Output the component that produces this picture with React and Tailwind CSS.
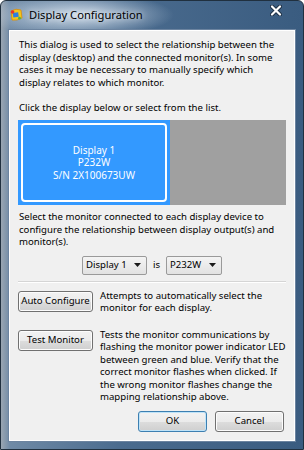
import React from 'react';

// Windows 7 style "Display Configuration" dialog

const AppIcon = () => (
  <svg width="14" height="14" viewBox="0 0 14 14">
    <path d="M2 3 Q7 0 12 2 L13 10 Q8 13 3 12 Z" fill="#f5c61b" stroke="#d58a10" strokeWidth="0.8" />
    <rect x="4" y="4.5" width="5.5" height="4.5" fill="#2f7de1" transform="rotate(-8 7 7)" />
    <circle cx="3.6" cy="4" r="1.8" fill="#e8352b" />
    <circle cx="10.5" cy="10.2" r="1.4" fill="#4cb648" />
  </svg>
);

const CloseX = () => (
  <svg width="12" height="11" viewBox="0 0 12 11">
    <path d="M2 1.5 L10 9.5 M10 1.5 L2 9.5" stroke="#1d2f44" strokeWidth="4" strokeLinecap="round" />
    <path d="M2 1.5 L10 9.5 M10 1.5 L2 9.5" stroke="#ffffff" strokeWidth="2.2" strokeLinecap="round" />
  </svg>
);

function WinButton({ children, className = '', isDefault = false }) {
  return (
    <button
      className={`h-[21px] rounded-[3px] border text-[9.6px] text-black leading-none bg-[linear-gradient(#f2f2f2_0%,#ebebeb_50%,#dddddd_51%,#cfcfcf_100%)] ${
        isDefault
          ? 'border-[#3c7fb1] shadow-[inset_0_0_0_1px_#bfe3f8]'
          : 'border-[#707070] shadow-[inset_0_0_0_1px_#fcfcfc]'
      } ${className}`}
    >
      {children}
    </button>
  );
}

function Combo({ value, className = '' }) {
  return (
    <div
      className={`h-[19px] flex items-center justify-between pl-[3px] pr-[5px] border border-[#9a9a9a] rounded-[2px] bg-[linear-gradient(#f4f4f4,#e2e2e2)] ${className}`}
    >
      <span>{value}</span>
      <svg width="7" height="4" viewBox="0 0 7 4">
        <path d="M0 0h7L3.5 4z" fill="#1a1a1a" />
      </svg>
    </div>
  );
}

export default function App() {
  return (
    <div className="w-[304px] h-[450px] flex flex-col border border-[#20303f] rounded-t-[6px] overflow-hidden bg-[radial-gradient(ellipse_95px_22px_at_78px_14px,rgba(214,226,238,0.95),rgba(214,226,238,0)_100%),linear-gradient(90deg,#9aa6b2_0%,#6f8aa6_3%,#4a6b8e_40%,#3a5c80_100%)] font-['Noto_Sans',sans-serif] text-[9.6px] leading-[12.5px] text-black">
      {/* title bar */}
      <div className="h-[28px] flex items-center pl-[8px] pr-[21px]">
        <AppIcon />
        <span className="ml-[6px] text-[11.2px] text-black [text-shadow:0_0_6px_rgba(255,255,255,0.9)]">
          Display Configuration
        </span>
        <div className="ml-auto -mt-[9px]">
          <CloseX />
        </div>
      </div>

      {/* client area */}
      <div className="flex-1 mx-[7px] mb-[7px] border border-[#6c84a0] bg-[#f0f0f0] shadow-[inset_0_0_0_1px_#ffffff] px-[9px] pt-[9px] flex flex-col">
        <div className="pl-[1px] whitespace-nowrap">
          <div>This dialog is used to select the relationship between the</div>
          <div>display (desktop) and the connected monitor(s). In some</div>
          <div>cases it may be necessary to manually specify which</div>
          <div>display relates to which monitor.</div>
          <div className="mt-[12.5px]">Click the display below or select from the list.</div>
        </div>

        {/* display map */}
        <div className="mt-[6px] h-[85px] bg-[#a0a0a0] flex">
          <div className="w-[152px] h-full bg-[#3399ff] p-[3px]">
            <div className="h-full rounded-[4px] border-[2px] border-white flex flex-col items-center justify-center text-white text-[10px] leading-[12.5px]">
              <div>Display 1</div>
              <div>P232W</div>
              <div>S/N 2X100673UW</div>
            </div>
          </div>
        </div>

        <div className="mt-[6px] pl-[1px] whitespace-nowrap">
          <div>Select the monitor connected to each display device to</div>
          <div>configure the relationship between display output(s) and</div>
          <div>monitor(s).</div>
        </div>

        <div className="mt-[7px] flex items-center justify-center">
          <Combo value="Display 1" className="w-[65px]" />
          <span className="mx-[6px]">is</span>
          <Combo value="P232W" className="w-[56px]" />
        </div>

        <div className="mt-[6px] h-[2px] border-t border-[#d5d5d5] border-b border-b-white" />

        <div className="mt-[7px] flex items-start">
          <WinButton className="mt-[1px] w-[75px] shrink-0">Auto Configure</WinButton>
          <div className="ml-[7px] whitespace-nowrap">
            <div>Attempts to automatically select the</div>
            <div>monitor for each display.</div>
          </div>
        </div>

        <div className="mt-[14px] flex items-start">
          <WinButton className="mt-[1px] w-[75px] shrink-0">Test Monitor</WinButton>
          <div className="ml-[7px] whitespace-nowrap">
            <div>Tests the monitor communications by</div>
            <div>flashing the monitor power indicator LED</div>
            <div>between green and blue. Verify that the</div>
            <div>correct monitor flashes when clicked. If</div>
            <div>the wrong monitor flashes change the</div>
            <div>mapping relationship above.</div>
          </div>
        </div>

        <div className="mt-[7px] flex justify-end gap-[8px] pr-[2px]">
          <WinButton isDefault className="w-[69px]">OK</WinButton>
          <WinButton className="w-[69px]">Cancel</WinButton>
        </div>
      </div>
    </div>
  );
}
